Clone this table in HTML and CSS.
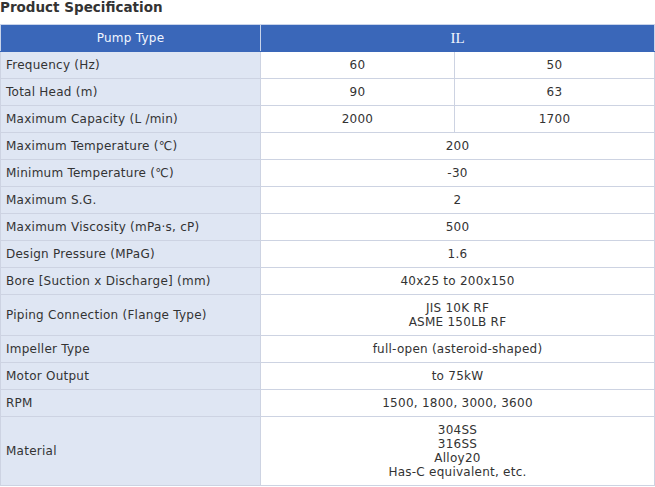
FILE: index.html
```html
<!DOCTYPE html>
<html>
<head>
<meta charset="utf-8">
<link rel="stylesheet" href="styles.css">
</head>
<body>
<h3 class="title">Product Specification</h3>
<table class="spec">
  <colgroup><col class="c1"><col class="c2"><col class="c3"></colgroup>
  <thead>
    <tr><th class="pump">Pump Type</th><th class="il" colspan="2">IL</th></tr>
  </thead>
  <tbody>
    <tr><td class="lbl">Frequency (Hz)</td><td>60</td><td>50</td></tr>
    <tr><td class="lbl">Total Head (m)</td><td>90</td><td>63</td></tr>
    <tr><td class="lbl">Maximum Capacity (L /min)</td><td>2000</td><td>1700</td></tr>
    <tr><td class="lbl">Maximum Temperature (℃)</td><td colspan="2">200</td></tr>
    <tr><td class="lbl">Minimum Temperature (℃)</td><td colspan="2">-30</td></tr>
    <tr><td class="lbl">Maximum S.G.</td><td colspan="2">2</td></tr>
    <tr><td class="lbl">Maximum Viscosity (mPa·s, cP)</td><td colspan="2">500</td></tr>
    <tr><td class="lbl">Design Pressure (MPaG)</td><td colspan="2">1.6</td></tr>
    <tr><td class="lbl">Bore [Suction x Discharge] (mm)</td><td colspan="2">40x25 to 200x150</td></tr>
    <tr><td class="lbl">Piping Connection (Flange Type)</td><td colspan="2">JIS 10K RF<br>ASME 150LB RF</td></tr>
    <tr><td class="lbl">Impeller Type</td><td colspan="2">full-open (asteroid-shaped)</td></tr>
    <tr><td class="lbl">Motor Output</td><td colspan="2">to 75kW</td></tr>
    <tr><td class="lbl">RPM</td><td colspan="2">1500, 1800, 3000, 3600</td></tr>
    <tr><td class="lbl">Material</td><td colspan="2">304SS<br>316SS<br>Alloy20<br>Has-C equivalent, etc.</td></tr>
  </tbody>
</table>
</body>
</html>
```

FILE: styles.css
```css
html, body {
  margin: 0;
  padding: 0;
  background: #fff;
}
body {
  font-family: "DejaVu Sans", Verdana, sans-serif;
  font-size: 12px;
  color: #333;
}
.title {
  margin: -2px 0 9px 0;
  padding-top: 2px;
  font-size: 13.5px;
  line-height: 15px;
  font-weight: bold;
  color: #333;
}
.spec {
  border-collapse: collapse;
  width: 654px;
  table-layout: fixed;
}
.c1 { width: 260px; }
.c2 { width: 194px; }
.c3 { width: 200px; }
.spec th, .spec td {
  border: 1px solid #cdd3e2;
  padding: 6px 5px;
  line-height: 14px;
  text-align: center;
  font-weight: normal;
  letter-spacing: 0.25px;
}
.spec th {
  background: #3a67b9;
  color: #f2f6ff;
  border-color: #c9d4ea;
  border-bottom-color: #3a67b9;
}
.spec th.il {
  font-family: "Liberation Serif", "Times New Roman", serif;
  font-size: 15px;
  letter-spacing: 0;
}
.spec td.lbl {
  background: #dfe6f3;
  text-align: left;
}
```
